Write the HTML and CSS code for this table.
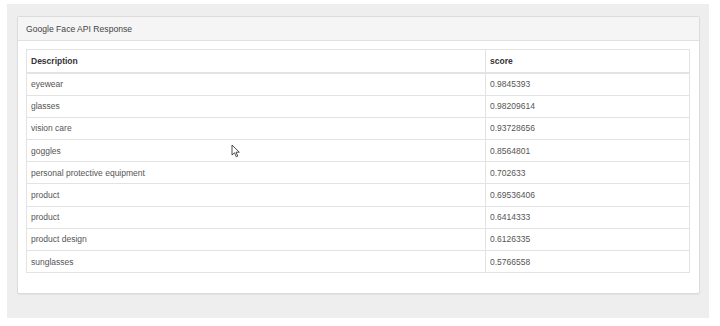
FILE: index.html
```html
<!DOCTYPE html>
<html>
<head>
<meta charset="utf-8">
<link rel="stylesheet" href="styles.css">
</head>
<body>
<div class="page">
  <div class="panel">
    <div class="panel-heading">Google Face API Response</div>
    <div class="panel-body">
      <table class="results">
        <colgroup><col class="c-desc"><col class="c-score"></colgroup>
        <thead>
          <tr><th>Description</th><th>score</th></tr>
        </thead>
        <tbody>
          <tr><td>eyewear</td><td>0.9845393</td></tr>
          <tr><td>glasses</td><td>0.98209614</td></tr>
          <tr><td>vision care</td><td>0.93728656</td></tr>
          <tr><td>goggles</td><td>0.8564801</td></tr>
          <tr><td>personal protective equipment</td><td>0.702633</td></tr>
          <tr><td>product</td><td>0.69536406</td></tr>
          <tr><td>product</td><td>0.6414333</td></tr>
          <tr><td>product design</td><td>0.6126335</td></tr>
          <tr><td>sunglasses</td><td>0.5766558</td></tr>
        </tbody>
      </table>
    </div>
  </div>
</div>
<svg class="cursor" width="10" height="14" viewBox="0 0 10 14">
  <path d="M1 1 L1 11 L3.5 8.8 L5.3 12.8 L6.8 12.1 L5 8.2 L8.3 8.2 Z" fill="#fff" stroke="#222" stroke-width="0.8" stroke-linejoin="round"/>
</svg>
</body>
</html>
```
FILE: styles.css
```css
html, body {
  margin: 0;
  padding: 0;
  background: #fff;
}
body {
  font-family: "Liberation Sans", Arial, sans-serif;
  font-size: 8.5px;
  color: #444;
  position: relative;
  padding-top: 4px;
  padding-left: 7px;
}
.page {
  width: 702px;
  height: 314px;
  box-sizing: border-box;
  background: #eeeeee;
  padding: 12px 9px 0 10px;
}
.panel {
  background: #fff;
  border: 1px solid #dcdcdc;
  border-radius: 2px;
  box-shadow: 0 1px 1px rgba(0,0,0,0.05);
  height: 278px;
  box-sizing: border-box;
}
.panel-heading {
  background: #f5f5f5;
  border-bottom: 1px solid #e0e0e0;
  height: 24px;
  box-sizing: border-box;
  padding: 7px 0 0 8px;
  color: #444;
  font-size: 8.6px;
}
.panel-body {
  padding: 8px 9px 0 8px;
}
.results {
  width: 664px;
  border-collapse: collapse;
  border: 1px solid #e0e0e0;
}
.c-desc { width: 459px; }
.results th, .results td {
  text-align: left;
  padding: 0 4px;
  border: 1px solid #e3e3e3;
  height: 22.2px;
  box-sizing: border-box;
}
.results th {
  font-weight: bold;
  color: #333;
  border-bottom: 2px solid #e3e3e3;
  height: 23.5px;
}
.results td {
  color: #555;
}
.cursor {
  position: absolute;
  left: 231px;
  top: 144px;
}
```
